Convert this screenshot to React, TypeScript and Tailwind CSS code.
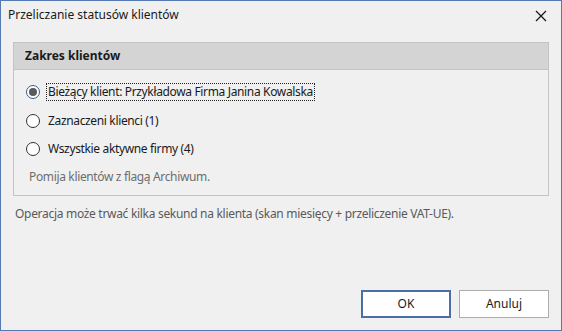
import React from "react";

const font = { fontFamily: '"Noto Sans", "Open Sans", sans-serif' };

function Radio({ checked }: { checked?: boolean }) {
  return (
    <span
      className={
        "flex items-center justify-center w-[14px] h-[14px] rounded-full bg-white border " +
        (checked ? "border-[#3c5d91]" : "border-[#333333]")
      }
    >
      {checked && <span className="w-[8px] h-[8px] rounded-full bg-[#5a5a5a]" />}
    </span>
  );
}

export default function App() {
  return (
    <div
      className="w-[562px] h-[331px] border border-[#5479b3] bg-[#f0f0f0] flex flex-col text-[12px] text-[#1a1a1a]"
      style={font}
    >
      <div className="h-[28px] flex items-center justify-between pl-[7px] pr-[14px]">
        <span className="leading-none">Przeliczanie statusów klientów</span>
        <svg width="12" height="12" viewBox="0 0 12 12" className="mt-[2px]">
          <path d="M1 1 L11 11 M11 1 L1 11" stroke="#1a1a1a" strokeWidth="1.3" />
        </svg>
      </div>

      <div className="mt-[13px] ml-[12px] w-[536px] h-[154px] border border-[#c4c4c4] flex flex-col">
        <div className="h-[27px] bg-[#d4d4d4] border-b border-[#c4c4c4] flex items-center pl-[11px] font-bold">
          Zakres klientów
        </div>
        <div className="flex flex-col pl-[12px] pt-[8px] tracking-[-0.35px]">
          <div className="h-[28px] flex items-center gap-[6px]">
            <Radio checked />
            <span className="border border-dotted border-[#222] px-[1px] h-[18px] flex items-center">
              Bieżący klient: Przykładowa Firma Janina Kowalska
            </span>
          </div>
          <div className="h-[29px] flex items-center gap-[6px]">
            <Radio />
            <span className="pl-[2px]">Zaznaczeni klienci (1)</span>
          </div>
          <div className="h-[28px] flex items-center gap-[6px]">
            <Radio />
            <span className="pl-[2px]">Wszystkie aktywne firmy (4)</span>
          </div>
          <div className="h-[28px] flex items-center pl-[3px] text-[#6d6d6d]">
            Pomija klientów z flagą Archiwum.
          </div>
        </div>
      </div>

      <div className="h-[36px] flex items-center pl-[14px] text-[#5a5a5a] tracking-[-0.3px]">
        Operacja może trwać kilka sekund na klienta (skan miesięcy + przeliczenie VAT-UE).
      </div>

      <div className="flex-1" />

      <div className="flex justify-end gap-[8px] pr-[12px] pb-[12px]">
        <button className="w-[90px] h-[28px] bg-white border-2 border-[#4a6ea8] flex items-center justify-center">
          OK
        </button>
        <button className="w-[90px] h-[28px] bg-white border border-[#adadad] flex items-center justify-center">
          Anuluj
        </button>
      </div>
    </div>
  );
}
